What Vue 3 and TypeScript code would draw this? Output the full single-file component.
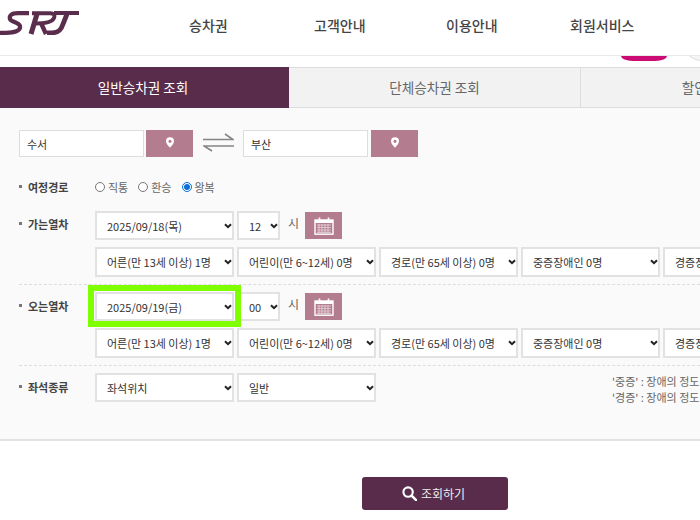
<script setup lang="ts">
const nav: string[] = ['승차권', '고객안내', '이용안내', '회원서비스']
const tabs: string[] = ['일반승차권 조회', '단체승차권 조회', '할인승차권 조회']
const passengers: string[] = [
  '어른(만 13세 이상) 1명',
  '어린이(만 6~12세) 0명',
  '경로(만 65세 이상) 0명',
  '중증장애인 0명',
  '경증장애인 0명',
]
const routes: { label: string; checked: boolean }[] = [
  { label: '직통', checked: false },
  { label: '환승', checked: false },
  { label: '왕복', checked: true },
]
</script>

<template>
  <div class="page">
    <header class="header">
      <svg class="logo" width="80" height="24" viewBox="0 0 80 24" aria-label="SRT">
        <g fill="none" stroke="#5a2d4d" stroke-linecap="butt">
          <path d="M29 2.200 H18 C11 2.200 9 5 10 8 C11 11 19 11 20 15 C21 20 14 21.800 6 21.800 H0" stroke-width="4.200" />
          <path d="M32 2.200 H50 C55 2.200 55 5 54 7 C52.500 10.500 47 12.500 36 12.500" stroke-width="4" />
          <path d="M37 3 L31 23" stroke-width="5" />
          <path d="M41 12 L46 23" stroke-width="4.400" />
          <path d="M54 2 H79" stroke-width="4" />
          <path d="M67 3 L63 13 C61 19.500 58 21.800 52 21.800 H47" stroke-width="4.800" />
        </g>
      </svg>
      <nav class="nav">
        <a v-for="item in nav" :key="item" class="nav-item">{{ item }}</a>
      </nav>
    </header>

    <div class="strip">
      <span class="pill"></span>
      <span class="circle"></span>
    </div>

    <div class="tabs">
      <div v-for="(tab, i) in tabs" :key="tab" class="tab" :class="{ active: i === 0 }">{{ tab }}</div>
    </div>

    <section class="panel">
      <div class="stations">
        <input class="station" type="text" value="수서" />
        <button class="pin" type="button" aria-label="출발역 선택">
          <svg width="8" height="11" viewBox="0 0 10 13">
            <path fill-rule="evenodd" fill="#fff" d="M5 0a5 5 0 0 1 5 5c0 2.800-3 6-5 8C3 11 0 7.800 0 5a5 5 0 0 1 5-5Zm0 3a2 2 0 1 0 0 4 2 2 0 0 0 0-4Z" />
          </svg>
        </button>
        <svg class="swap" width="31" height="19" viewBox="0 0 31 19" aria-label="출발역 도착역 교환">
          <g fill="none" stroke="#858585" stroke-width="1.600">
            <path d="M0 6.500 H30 L22 1" />
            <path d="M31 13 H1 L9 18" />
          </g>
        </svg>
        <input class="station" type="text" value="부산" />
        <button class="pin second" type="button" aria-label="도착역 선택">
          <svg width="8" height="11" viewBox="0 0 10 13">
            <path fill-rule="evenodd" fill="#fff" d="M5 0a5 5 0 0 1 5 5c0 2.800-3 6-5 8C3 11 0 7.800 0 5a5 5 0 0 1 5-5Zm0 3a2 2 0 1 0 0 4 2 2 0 0 0 0-4Z" />
          </svg>
        </button>
      </div>

      <div class="row route">
        <span class="label">여정경로</span>
        <div class="radios">
          <label v-for="r in routes" :key="r.label" class="radio">
            <input type="radio" name="route" :checked="r.checked" />{{ r.label }}
          </label>
        </div>
      </div>

      <div class="row trip">
        <span class="label go">가는열차</span>
        <div class="fields">
          <div class="line">
            <select class="sel"><option>2025/09/18(목)</option></select>
            <select class="sel hour"><option>12</option></select>
            <span class="unit">시</span>
            <button class="cal" type="button" aria-label="달력">
              <svg width="20" height="18" viewBox="0 0 20 18">
                <rect x="1" y="3" width="18" height="14.200" fill="none" stroke="#fff" stroke-width="1.400" />
                <rect x="1" y="3" width="18" height="3" fill="#fff" />
                <path d="M5.500 0.500V4M14.500 0.500V4" stroke="#fff" stroke-width="1.600" />
                <path d="M3 8h14M3 10.500h14M3 13h14M3 15.400h14M5 7v9.500M8 7v9.500M11 7v9.500M14 7v9.500" stroke="#eadde2" stroke-width="1.200" opacity=".75" />
              </svg>
            </button>
          </div>
          <div class="line">
            <select v-for="p in passengers" :key="p" class="sel tall"><option>{{ p }}</option></select>
          </div>
        </div>
      </div>

      <div class="row trip dashed">
        <span class="label">오는열차</span>
        <div class="fields">
          <div class="line">
            <div class="focus-wrap">
              <select class="sel"><option>2025/09/19(금)</option></select>
              <span class="focus"></span>
            </div>
            <select class="sel hour"><option>00</option></select>
            <span class="unit">시</span>
            <button class="cal" type="button" aria-label="달력">
              <svg width="20" height="18" viewBox="0 0 20 18">
                <rect x="1" y="3" width="18" height="14.200" fill="none" stroke="#fff" stroke-width="1.400" />
                <rect x="1" y="3" width="18" height="3" fill="#fff" />
                <path d="M5.500 0.500V4M14.500 0.500V4" stroke="#fff" stroke-width="1.600" />
                <path d="M3 8h14M3 10.500h14M3 13h14M3 15.400h14M5 7v9.500M8 7v9.500M11 7v9.500M14 7v9.500" stroke="#eadde2" stroke-width="1.200" opacity=".75" />
              </svg>
            </button>
          </div>
          <div class="line">
            <select v-for="p in passengers" :key="p" class="sel tall"><option>{{ p }}</option></select>
          </div>
        </div>
      </div>

      <div class="row seat dashed">
        <span class="label">좌석종류</span>
        <div class="line">
          <select class="sel seat-pos"><option>좌석위치</option></select>
          <select class="sel"><option>일반</option></select>
        </div>
        <p class="note">'중증' : 장애의 정도가 심한 장애인<br />'경증' : 장애의 정도가 심하지 않은 장애인</p>
      </div>
    </section>

    <button class="search" type="button">
      <svg width="15" height="15" viewBox="0 0 16 16">
        <circle cx="6.500" cy="6.500" r="5" fill="none" stroke="#fff" stroke-width="2.300" />
        <path d="M10.200 10.200 15 15" stroke="#fff" stroke-width="2.800" stroke-linecap="round" />
      </svg>
      조회하기
    </button>
  </div>
</template>

<style scoped>
.page {
  width: 700px;
  height: 520px;
  overflow: hidden;
  background: #fff;
  font-family: "Noto Sans CJK KR", "Noto Sans", sans-serif;
  color: #333;
  position: relative;
}

.header {
  height: 55px;
  display: flex;
  align-items: flex-start;
  border-bottom: 1px solid #e9e9e9;
}
.logo {
  flex: none;
  margin-top: 11px;
  display: block;
}
.nav {
  display: flex;
  margin-left: 109px;
  padding-top: 15px;
}
.nav-item {
  font-size: 14px;
  line-height: 20px;
  font-weight: 500;
  color: #444;
  width: 125px;
  white-space: nowrap;
}
.nav-item:nth-child(2) { width: 132px; }
.nav-item:nth-child(3) { width: 124px; }

.strip {
  height: 11px;
  display: flex;
  justify-content: flex-end;
  overflow: hidden;
  position: relative;
}
.pill {
  flex: none;
  width: 46px;
  height: 5px;
  margin-right: 15px;
  background: #cb0a74;
  border-radius: 0 0 14px 14px / 0 0 6px 6px;
}
.circle {
  flex: none;
  width: 40px;
  height: 40px;
  margin-top: -35px;
  margin-right: -22px;
  border-radius: 50%;
  border: 1px solid #ddd;
  box-sizing: border-box;
  background: #f6f6f6;
}

.tabs {
  display: flex;
  height: 41px;
  box-sizing: border-box;
  border-top: 1px solid #ddd;
  border-bottom: 1px solid #ddd;
  background: #f2f2f2;
}
.tab {
  flex: none;
  width: 292px;
  box-sizing: border-box;
  border-right: 1px solid #ddd;
  font-size: 13.600px;
  line-height: 39px;
  text-align: center;
  color: #666;
  white-space: nowrap;
}
.tab.active {
  width: 289px;
  margin: -1px 0;
  padding-right: 3px;
  height: 41px;
  line-height: 41px;
  background: #592c4c;
  color: #fff;
  border-right: 0;
}
.tab:last-child {
  width: 292px;
  border-right: 0;
}

.panel {
  height: 333px;
  box-sizing: border-box;
  padding: 22px 0 0 19px;
  background: #fafafa;
  border-bottom: 2px solid #e2e2e2;
}

.stations {
  display: flex;
  align-items: flex-start;
  height: 27px;
}
.station {
  width: 125px;
  height: 27px;
  box-sizing: border-box;
  padding: 0 7px;
  border: 1px solid #ddd;
  background: #fff;
  font: inherit;
  font-size: 11px;
  color: #333;
  outline: none;
}
.pin {
  width: 47px;
  height: 27px;
  margin-left: 2px;
  padding: 0;
  border: 0;
  background: #b47c8f;
  display: flex;
  align-items: center;
  justify-content: center;
}
.pin svg { margin-top: -2px; }
.pin.second { margin-left: 3px; }
.swap {
  flex: none;
  margin: 3px 9px 0 10px;
}

.row {
  display: flex;
  align-items: flex-start;
}
.label {
  flex: none;
  width: 76px;
  box-sizing: border-box;
  padding-left: 9px;
  position: relative;
  font-size: 11px;
  line-height: 16px;
  font-weight: 700;
  color: #444;
}
.label::before {
  content: "";
  position: absolute;
  left: 0;
  top: 6px;
  width: 3px;
  height: 3px;
  background: #777;
}

.route {
  margin-top: 21px;
  height: 18px;
}
.route .label { padding-top: 1px; }
.route .label::before { top: 7px; }
.radios {
  display: flex;
  gap: 10px;
}
.radio {
  display: flex;
  align-items: center;
  font-size: 11px;
  line-height: 18px;
  color: #666;
  white-space: nowrap;
}
.radio input {
  width: 10px;
  height: 10px;
  margin: 0 3px 0 0;
  accent-color: #0a6fd6;
}

.trip {
  padding-top: 15px;
  height: 66px;
}
.trip .label { margin-top: 6px; }
.trip .label.go { margin-top: 5px; }
.trip.dashed {
  margin-top: 7px;
  padding-top: 7px;
  border-top: 1px dashed #ddd;
  height: 66px;
}
.fields {
  display: flex;
  flex-direction: column;
  gap: 7px;
}
.line {
  display: flex;
  align-items: flex-start;
  gap: 3px;
}
.sel {
  flex: none;
  width: 139px;
  height: 29px;
  box-sizing: border-box;
  padding: 0 12px 0 10px;
  border: 2px solid #e2e2e2;
  appearance: none;
  background: #fff url("data:image/svg+xml,%3Csvg xmlns='http://www.w3.org/2000/svg' width='8' height='6' viewBox='0 0 8 6'%3E%3Cpath d='M1 1.200 4 4.200 7 1.200' fill='none' stroke='%23222' stroke-width='2'/%3E%3C/svg%3E") no-repeat right 0 center;
  border-radius: 0;
  font: inherit;
  font-size: 11px;
  color: #333;
}
.sel.tall { height: 30px; }
.sel.hour { width: 43px; }
.unit {
  font-size: 12px;
  line-height: 24px;
  color: #666;
  margin-left: 5px;
}
.cal {
  width: 37px;
  height: 27px;
  margin: 1px 0 0 3px;
  padding: 0;
  border: 0;
  background: #b47c8f;
  display: flex;
  align-items: center;
  justify-content: center;
}
.focus-wrap {
  position: relative;
  height: 29px;
}
.focus-wrap .sel { display: block; }
.focus {
  position: absolute;
  left: -7px;
  top: -7px;
  width: 153px;
  height: 42px;
  box-sizing: border-box;
  border: 6px solid #80ff00;
  pointer-events: none;
}

.seat {
  margin-top: 7px;
  padding-top: 7px;
  border-top: 1px dashed #ddd;
  position: relative;
}
.seat .label { margin-top: 6px; }
.note {
  margin: 0 0 0 236px;
  font-size: 11px;
  line-height: 16px;
  color: #666;
  white-space: nowrap;
}

.search {
  display: flex;
  align-items: center;
  justify-content: center;
  gap: 4px;
  width: 146px;
  height: 33px;
  margin: 36px 0 0 362px;
  padding: 0 3px 0 0;
  border: 0;
  border-radius: 3px;
  background: #592c4c;
  color: #eee;
  font: inherit;
  font-size: 12px;
}
</style>

<style>
html, body { margin: 0; background: #fff; }
</style>
